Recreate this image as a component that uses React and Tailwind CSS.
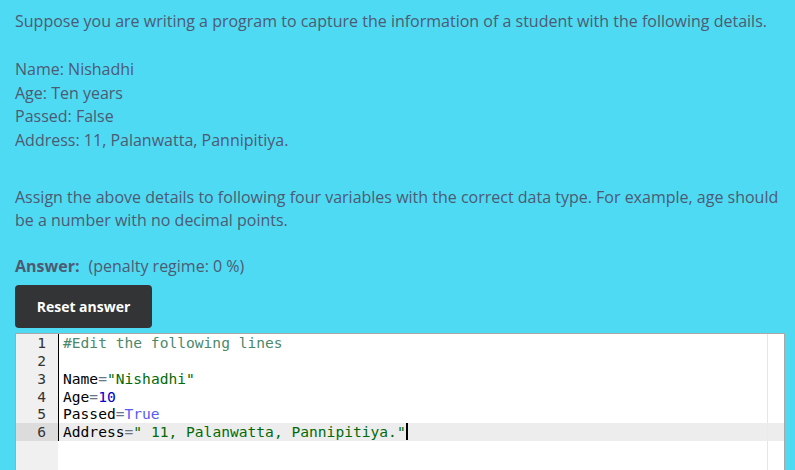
import React from "react";

const lines = [
  [{ t: "#Edit the following lines", c: "text-[#4c886b]" }],
  [],
  [
    { t: "Name", c: "text-black" },
    { t: "=", c: "text-[#687687]" },
    { t: '"Nishadhi"', c: "text-[#036a07]" },
  ],
  [
    { t: "Age", c: "text-black" },
    { t: "=", c: "text-[#687687]" },
    { t: "10", c: "text-[#0000cd]" },
  ],
  [
    { t: "Passed", c: "text-black" },
    { t: "=", c: "text-[#687687]" },
    { t: "True", c: "text-[#585cf6]" },
  ],
  [
    { t: "Address", c: "text-black" },
    { t: "=", c: "text-[#687687]" },
    { t: '" 11, Palanwatta, Pannipitiya."', c: "text-[#036a07]" },
  ],
];

function Editor() {
  return (
    <div className="relative mt-[5px] flex h-[160px] w-[770px] border border-[#a8a8a8] bg-white">
      {/* gutter */}
      <div className="w-[42px] shrink-0 bg-[#f0f0f0] text-[#333]">
        {lines.map((_, i) => (
          <div
            key={i}
            className={
              "h-[17.8px] pr-[12px] text-right leading-[17.8px] " +
              (i === 5 ? "bg-[#dcdcdc]" : "")
            }
          >
            {i + 1}
          </div>
        ))}
      </div>
      <div className="relative flex-1">
        <div className="absolute top-0 bottom-0 left-[709px] w-px bg-[#e6e6e6]" />
        <div className="relative border-l border-black">
          {lines.map((parts, i) => (
            <div
              key={i}
              className={
                "h-[17.8px] whitespace-pre pl-[4px] leading-[17.8px] " +
                (i === 5 ? "bg-[#ebebeb]/90" : "")
              }
            >
              {parts.map((p, j) => (
                <span key={j} className={p.c}>
                  {p.t}
                </span>
              ))}
              {i === 5 && (
                <span className="relative inline-block h-[17px] w-0 align-top">
                  <span className="absolute left-0 top-0 h-[17px] w-[2px] bg-black" />
                </span>
              )}
            </div>
          ))}
        </div>
      </div>
    </div>
  );
}

export default function App() {
  return (
    <div className="h-[470px] overflow-hidden bg-[#4fdaf3] pl-[15px] pr-[15px] pt-[10px] font-['Open_Sans',sans-serif] text-[16px] leading-[23.4px] text-[#4d5a72]">
      <p>Suppose you are writing a program to capture the information of a student with the following details.</p>
      <div className="mt-[25px]">
        <div>Name: Nishadhi</div>
        <div>Age: Ten years</div>
        <div>Passed: False</div>
        <div>Address: 11, Palanwatta, Pannipitiya.</div>
      </div>
      <p className="mt-[34px]">
        Assign the above details to following four variables with the correct data type. For example, age should be a number with no decimal points.
      </p>
      <div className="mt-[22px]">
        <span className="font-bold">Answer:</span>
        <span className="ml-[9px]">(penalty regime: 0 %)</span>
      </div>
      <button className="mt-[7px] flex h-[43px] w-[137px] items-center justify-center rounded-[4px] bg-[#333436] text-[14px] font-bold text-white">
        Reset answer
      </button>
      <div className="font-['DejaVu_Sans_Mono',monospace] text-[14.6px]">
        <Editor />
      </div>
    </div>
  );
}
